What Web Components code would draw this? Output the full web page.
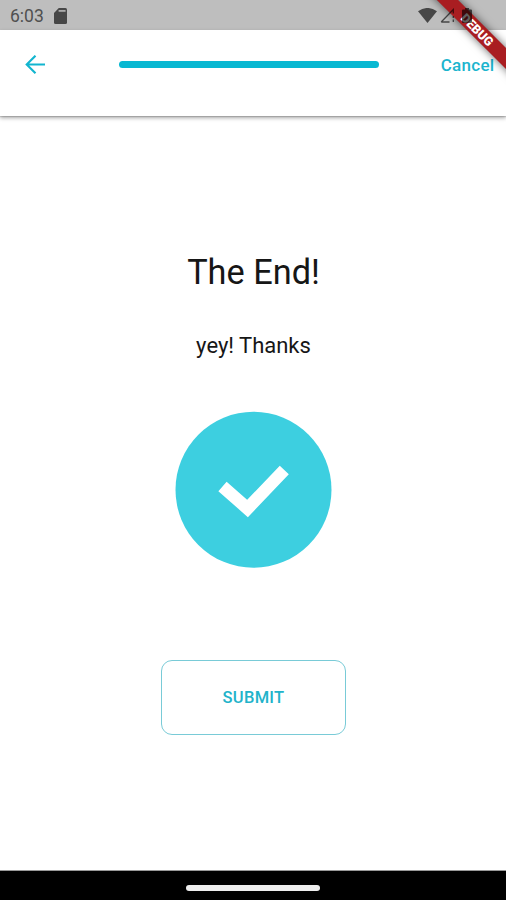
<!DOCTYPE html>
<html lang="en"><head><meta charset="utf-8"><title>The End</title>
<style>html,body{margin:0;height:100%;background:#fff;overflow:hidden}</style></head>
<body><end-screen></end-screen>
<script>
const define=(name,html)=>customElements.define(name,class extends HTMLElement{
  constructor(){super();this.attachShadow({mode:'open'}).innerHTML=html;}
});
define('status-bar',`<style>
:host{display:flex;box-sizing:border-box;height:30px;padding:0 34px 0 10px;align-items:center;justify-content:space-between;color:#505050;font:17.5px/30px Roboto,sans-serif}
div{display:flex;align-items:center}svg{display:block;fill:#000000a0}.l{gap:10px;padding-top:1px}.r{gap:3px}.battery{margin-left:4px}
</style><div class="l"><span>6:03</span><svg width="13" height="16" viewBox="0 0 13 16"><path d="M4.8 0H11.5Q13 0 13 1.5V14.5Q13 16 11.5 16H1.5Q0 16 0 14.5V5Z"/><path d="M4.6 2h7v1.8h-7z" fill="#aaa"/></svg></div>
<div class="r"><svg width="19" height="15" viewBox="0 0 19 15"><path d="M0 3.3Q9.5-3.4 19 3.3L9.5 15Z"/></svg><svg width="15" height="15" viewBox="0 0 15 15"><path d="M1.2 14L13.3 1.5V5.5M13.3 8V10M13.3 11.5V14M1.2 14H9.5" fill="none" stroke="#000000a0" stroke-width="1.3"/></svg><svg class="battery" width="10" height="15" viewBox="0 0 10 15"><path d="M3 0H7V1.5H9Q10 1.5 10 2.5V14Q10 15 9 15H1Q0 15 0 14V2.5Q0 1.5 1 1.5H3Z"/></svg></div>`);
define('progress-bar',`<style>:host{display:block;width:260px;height:7px;border-radius:4px;background:#08b8d2}</style>`);
define('app-header',`<style>
:host{display:grid;box-sizing:border-box;height:86px;grid-template-columns:119px 260px 1fr;align-items:center;padding:0 12px 17px 0;background:#fff;box-shadow:0 2px 4px #0005,0 1px 1px #0002;color:#1cb5ce;font:500 17px/20px Roboto,sans-serif;letter-spacing:.3px}
svg{display:block;margin-left:25px}span{text-align:right;margin-right:-.5px}
</style><svg width="21" height="20" viewBox="0 0 21 20" fill="none" stroke="#12b5cf" stroke-width="2.1"><path d="M20 9.5H2M10.5 .7L1.7 9.5L10.5 18.3"/></svg><progress-bar></progress-bar><span><slot></slot></span>`);
define('success-mark',`<style>:host{display:block;width:157px;height:157px}svg{display:block}</style>
<svg width="157" height="157" viewBox="0 0 157 157"><circle cx="78.5" cy="78.8" r="78" fill="#3dcfe0"/><path d="M47.5 75.5L72.5 97.5L109.3 59" fill="none" stroke="#fff" stroke-width="12.5"/></svg>`);
define('submit-button',`<style>
:host{display:block}button{display:block;box-sizing:border-box;width:185px;height:75px;border:1.5px solid #79cbd7;border-radius:11px;background:#fff;padding:0;color:#22b3ca;font:500 16.5px/20px Roboto,sans-serif;letter-spacing:.3px}
</style><button><slot></slot></button>`);
define('debug-banner',`<style>
:host{position:absolute;z-index:2;top:0;right:0;width:90px;height:90px;overflow:hidden;pointer-events:none}
div{position:absolute;box-sizing:border-box;width:150px;height:15px;left:-12px;top:23.5px;padding-right:5px;transform:rotate(45deg);background:#a91d21;box-shadow:0 0 8px #0009;color:#fff;font:900 12.5px/15px Roboto,sans-serif;text-align:center}
</style><div><slot></slot></div>`);
define('nav-bar',`<style>:host{display:flex;box-sizing:border-box;height:29px;background:#000;justify-content:center;align-items:center;padding-top:5px;border-top:0;box-shadow:0 -1px #999}i{width:134px;height:6px;border-radius:3px;background:#eee}</style><i></i>`);
define('end-screen',`<style>
:host{display:flex;flex-direction:column;position:relative;width:506px;height:900px;background:linear-gradient(#bebebe 30px,#fff 30px);color:#161616;font-family:Roboto,sans-serif}
status-bar{z-index:3}app-header{z-index:1}main{flex:1;display:flex;flex-direction:column;align-items:center;padding-left:1px}
h1{margin:134px 0 0;font:400 34.3px/44px Roboto,sans-serif}p{margin:38px 0 0;font:400 22px/28px Roboto,sans-serif}
success-mark{margin-top:51px}submit-button{margin-top:92px}
</style><status-bar></status-bar><app-header>Cancel</app-header><main><h1>The End!</h1><p>yey! Thanks</p><success-mark></success-mark><submit-button>SUBMIT</submit-button></main><nav-bar></nav-bar><debug-banner>DEBUG</debug-banner>`);
</script></body></html>
